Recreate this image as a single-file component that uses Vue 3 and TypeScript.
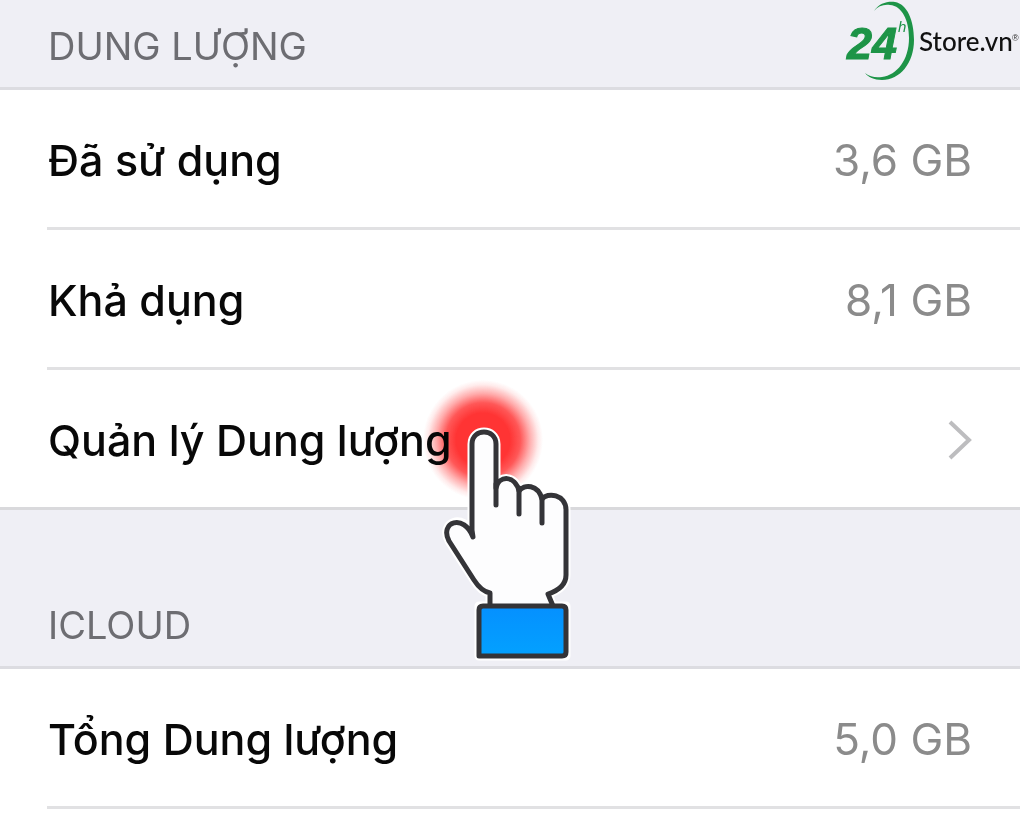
<script setup lang="ts">
interface Row {
  label: string
  value?: string
}
interface Section {
  id: string
  title: string
  rows: Row[]
}

const sections: Section[] = [
  {
    id: 'storage',
    title: 'DUNG LƯỢNG',
    rows: [
      { label: 'Đã sử dụng', value: '3,6 GB' },
      { label: 'Khả dụng', value: '8,1 GB' },
      { label: 'Quản lý Dung lượng' },
    ],
  },
  {
    id: 'icloud',
    title: 'ICLOUD',
    rows: [{ label: 'Tổng Dung lượng', value: '5,0 GB' }],
  },
]
</script>

<template>
  <main class="settings">
    <section v-for="section in sections" :key="section.id" :class="section.id" :aria-labelledby="section.id">
      <header class="heading">
        <h2 :id="section.id" class="title">{{ section.title }}</h2>
        <svg v-if="section.id === 'storage'" class="logo" viewBox="0 0 176 84" role="img" aria-label="24h Store.vn">
          <path class="green" d="M30 11C35 3 44 1 51 2C63 4 70 20 70 40C70 63 56 80 38 80C30 80 24 77 21 73C26 77 32 78 38 77C53 75 65 60 65 38C65 20 58 6 46 5C40 4 34 6 30 11Z" />
          <text class="number green" x="3" y="59">24</text>
          <text class="hour green" x="54" y="32">h</text>
          <text class="brand" x="75" y="51">Store.vn</text>
          <text class="mark" x="168" y="41">®</text>
        </svg>
      </header>
      <ul class="rows">
        <li v-for="row in section.rows" :key="row.label" class="item">
          <div v-if="row.value" class="row">
            <span class="label">{{ row.label }}</span>
            <span class="value">{{ row.value }}</span>
          </div>
          <button v-else class="row" type="button">
            <span class="label">{{ row.label }}</span>
            <svg class="chevron" viewBox="0 0 24 40" aria-hidden="true">
              <path d="M2 2L21 20L2 38" />
            </svg>
            <span class="glow"></span>
            <svg class="hand" viewBox="440 424 136 240" aria-hidden="true">
              <defs>
                <linearGradient id="cuff" x1="0" y1="0" x2="0" y2="1">
                  <stop offset="0" stop-color="#0590ff" />
                  <stop offset="1" stop-color="#03a1ff" />
                </linearGradient>
              </defs>
              <path class="halo" d="M490 606V593Q481 591 474 580L449 541C439 522 464 513 472 534V444C472 428 496 428 496 444V488C499 475 515 475 519 491C524 484 538 484 542 499C547 492 566 494 566 510V575Q566 588 548 594L553 606H566V656H479V606H490Z" />
              <path class="skin" d="M490 606V593Q481 591 474 580L449 541C439 522 464 513 473 537L472 530V444C472 428 496 428 496 444V488C499 475 515 475 519 491C524 484 538 484 542 499C547 492 566 494 566 510V575Q566 588 548 594L553 606" />
              <path class="line" d="M496 484V505M519 488V514M542 497V523" />
              <path class="cuff" d="M483 606H562Q566 606 566 610V652Q566 656 562 656H479V610Q479 606 483 606Z" />
            </svg>
          </button>
        </li>
      </ul>
    </section>
  </main>
</template>

<style>
body {
  margin: 0;
  background: #fff;
}
</style>

<style scoped>
.settings {
  min-height: 100vh;
  background: #fff;
  color: #080808;
  font-family: Inter, "Liberation Sans", sans-serif;
  font-size: 44px;
  line-height: 56px;
}
.heading {
  display: flex;
  align-items: flex-end;
  justify-content: space-between;
  box-sizing: border-box;
  height: 90px;
  padding-left: 48px;
  background: #efeff5;
  border-bottom: 3px solid #dcdce1;
}
.icloud .heading {
  height: 159px;
}
.title {
  margin: 0 0 17px;
  color: #6d6d72;
  font-size: 38px;
  font-weight: 400;
  line-height: 48px;
}
.logo {
  align-self: flex-start;
  width: 176px;
  height: 84px;
}
.green {
  fill: #1d9447;
}
.number {
  font: italic 700 45px "Liberation Sans", sans-serif;
  stroke: #1d9447;
  stroke-width: 1px;
}
.hour {
  font: italic 400 15px "Liberation Sans", sans-serif;
}
.brand {
  fill: #111;
  font: 500 26px Lato, sans-serif;
}
.mark {
  fill: #333;
  font: 400 9px "Liberation Sans", sans-serif;
}
.rows {
  margin: 0;
  padding: 0;
  list-style: none;
}
.item {
  margin-left: 47px;
  border-bottom: 3px solid #e1e1e3;
}
.storage .item:last-child {
  margin-left: 0;
  padding-left: 47px;
  border-bottom-color: #d9d9dc;
}
.row {
  position: relative;
  display: flex;
  align-items: center;
  justify-content: space-between;
  box-sizing: border-box;
  width: 100%;
  min-height: 137px;
  padding: 2px 48px 0 1px;
  border: 0;
  background: none;
  color: inherit;
  font: inherit;
  text-align: left;
}
.label {
  font-size: 43px;
  font-weight: 500;
}
.value {
  color: #8b8b8b;
}
.chevron {
  width: 24px;
  height: 40px;
  fill: none;
  stroke: #bdbdbf;
  stroke-width: 4px;
}
.glow {
  position: absolute;
  top: 10px;
  left: 376px;
  width: 120px;
  height: 120px;
  background: radial-gradient(closest-side, #ff3434 0 45%, rgb(255 45 45 / 80%) 62%, rgb(255 50 50 / 40%) 78%, rgb(255 60 60 / 10%) 92%, transparent);
  mix-blend-mode: multiply;
}
.hand {
  position: absolute;
  top: 54px;
  left: 393px;
  z-index: 1;
  width: 136px;
  height: 240px;
}
.hand path {
  stroke: #343438;
  stroke-width: 5px;
  stroke-linecap: round;
  stroke-linejoin: round;
}
.hand .halo {
  fill: #fff;
  stroke: #fff;
  stroke-width: 9px;
}
.skin {
  fill: #fdfdfe;
}
.hand .line {
  fill: none;
}
.cuff {
  fill: url(#cuff);
}
</style>
